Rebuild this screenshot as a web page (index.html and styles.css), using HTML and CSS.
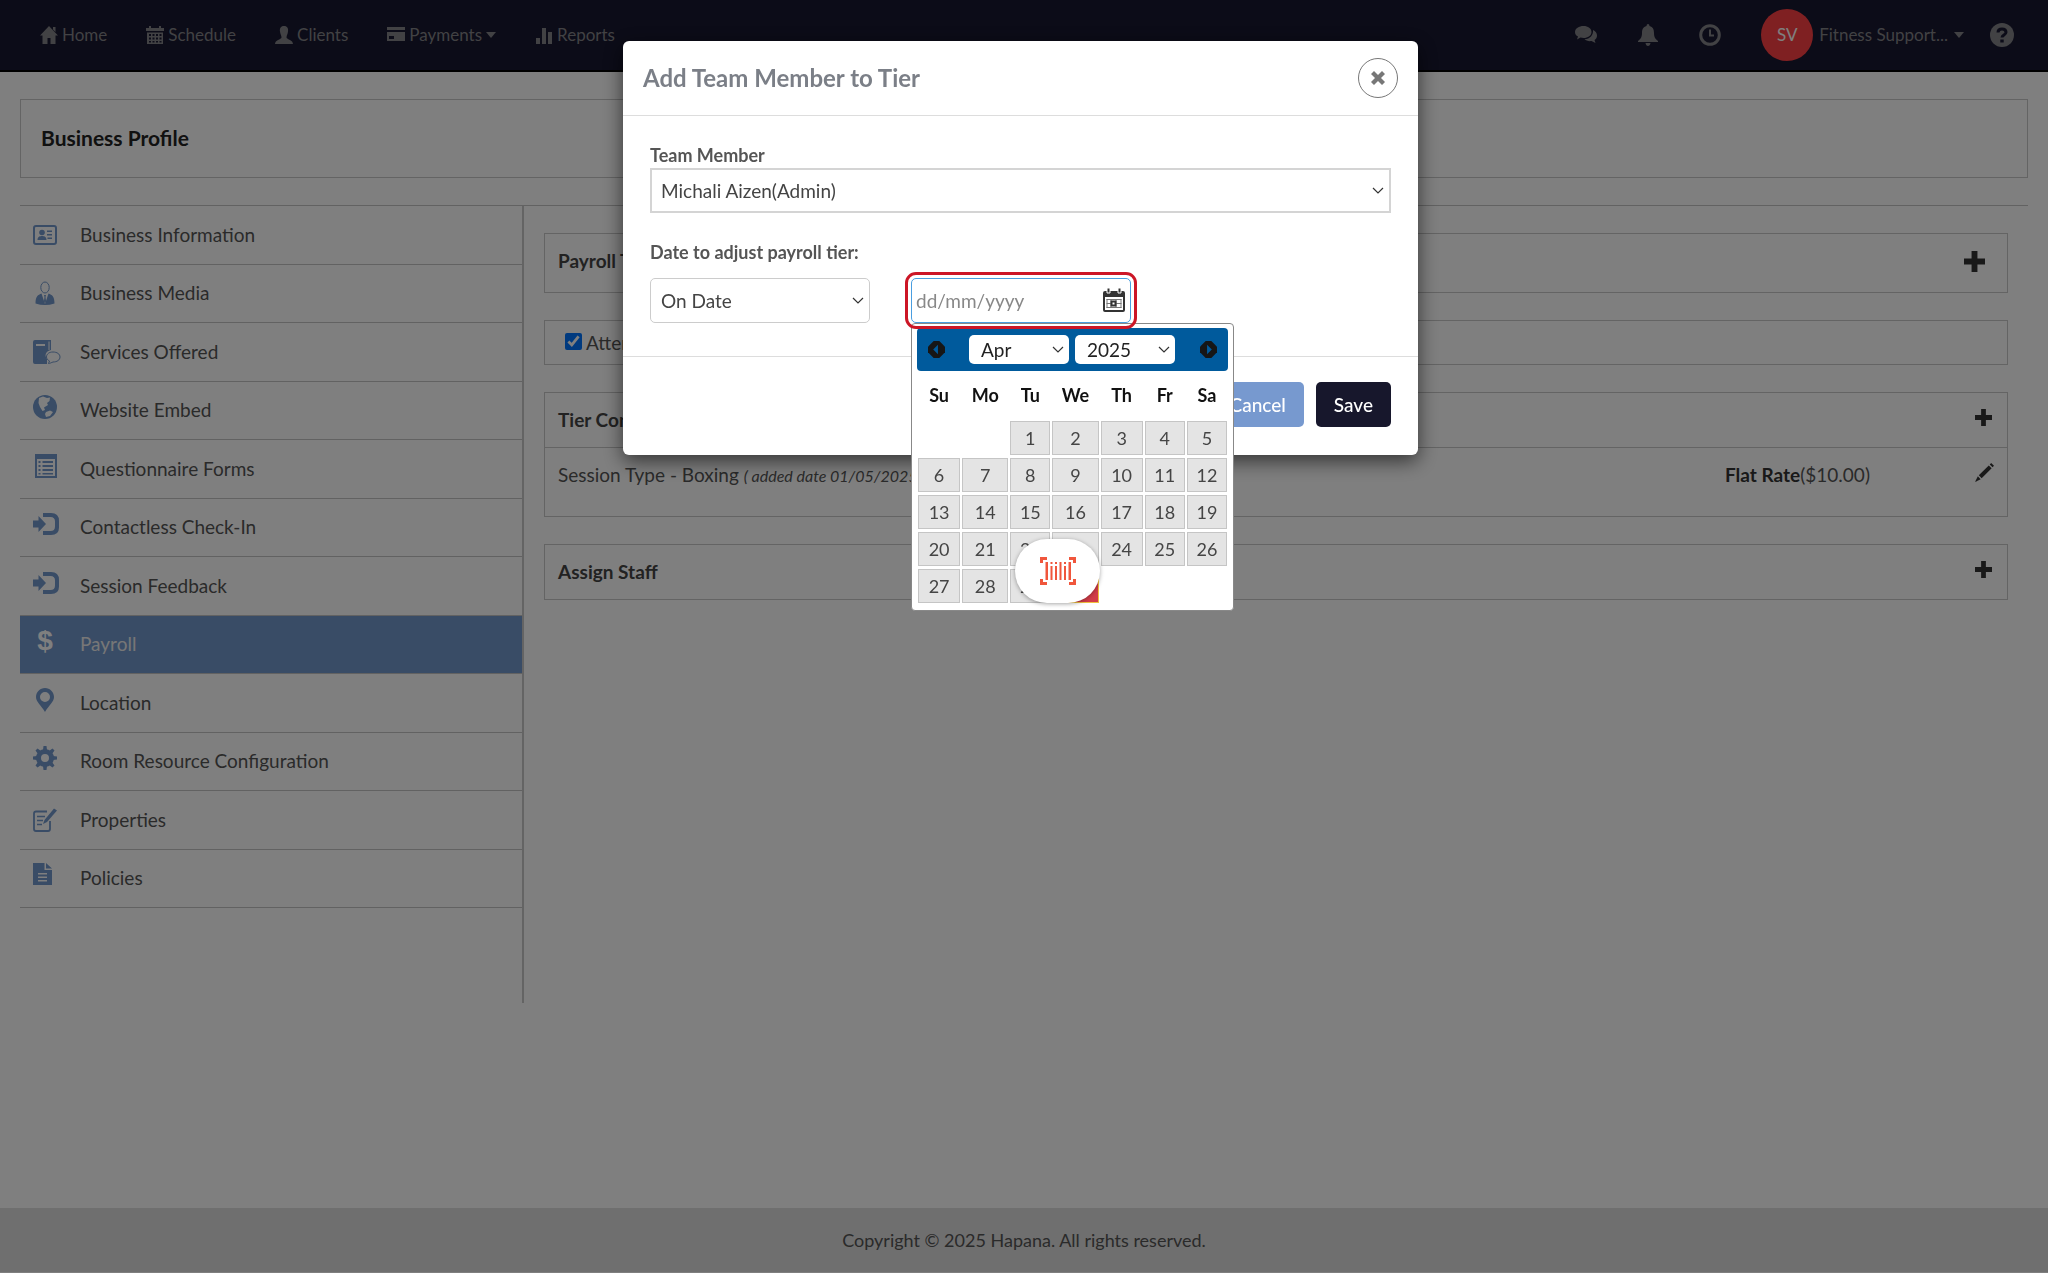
FILE: index.html
```html
<!DOCTYPE html>
<html lang="en">
<head>
<meta charset="utf-8">
<title>Business Profile</title>
<link rel="stylesheet" href="styles.css">
</head>
<body>
<svg class="sprite" aria-hidden="true">
  <symbol id="i-plus" viewBox="0 0 20 20"><path d="M7.200 0H12.800V7.200H20V12.800H12.800V20H7.200V12.800H0V7.200H7.200Z"/></symbol>
  <symbol id="i-caret" viewBox="0 0 10 6"><path d="M0 0H10L5 6Z"/></symbol>
  <symbol id="i-signin" viewBox="0 0 26 22"><path d="M0 7.500H5.500V3L13 11L5.500 19V14.500H0ZM10 0H18Q26 0 26 8V14.500Q26 22 18 22H10V18H17.500Q22 18 22 13.500V8.500Q22 4 17.500 4H10Z"/></symbol>
</svg>

<header class="nav">
  <nav class="nav-links">
    <a href="#"><svg viewBox="0 0 18 18"><path d="M9 0L18 9.500H15.500V18H10.500V12H7.500V18H2.500V9.500H0L9 0ZM13 1H15.500V6L13 3.500Z"/></svg>Home</a>
    <a href="#"><svg viewBox="0 0 18 18"><path d="M0 2H3V0H5V2H13V0H15V2H18V5H0ZM1 6.500H17V18H1ZM3 8V10H5V8ZM6.500 8V10H8.500V8ZM10 8V10H12V8ZM13.500 8V10H15.500V8ZM3 11.500V13.500H5V11.500ZM6.500 11.500V13.500H8.500V11.500ZM10 11.500V13.500H12V11.500ZM13.500 11.500V13.500H15.500V11.500ZM3 15V16.500H5V15ZM6.500 15V16.500H8.500V15ZM10 15V16.500H12V15ZM13.500 15V16.500H15.500V15Z" fill-rule="evenodd"/></svg>Schedule</a>
    <a href="#"><svg viewBox="0 0 18 18"><path d="M9 0C12.500 0 13.500 2.500 13 5.500C12.800 8 11.500 9.500 11.500 11.500C12 13.500 18 14 18 18H0C0 14 6 13.500 6.500 11.500C6.500 9.500 5.200 8 5 5.500C4.500 2.500 5.500 0 9 0Z"/></svg>Clients</a>
    <a href="#"><svg viewBox="0 0 18 18"><path d="M0 1H18V4H0ZM0 6H18V15H0ZM2 10V13H7V10Z" fill-rule="evenodd"/></svg>Payments<svg class="caret"><use href="#i-caret"/></svg></a>
    <a href="#"><svg viewBox="0 0 18 18"><path d="M1 12H5V18H1ZM7 2H11V18H7ZM13 6H17V18H13Z"/></svg>Reports</a>
  </nav>
  <div class="nav-tools">
    <a href="#" aria-label="Messages"><svg class="tool" viewBox="0 0 22 22"><path d="M8.500 2C13 2 16.500 4.500 16.500 8S13 14 8.500 14C7.500 14 6.500 13.800 5.500 13.500L2 15.500L3 12.500C1 11.500 0 10 0 8C0 4.500 4 2 8.500 2ZM18 6C20.500 7 22 9 22 11.500C22 13.500 21 15 19.500 16L20.500 19L16.500 17C13.500 17.500 11 16.500 9.500 15.300C15 15 18.500 11 18 6Z"/></svg></a>
    <a href="#" aria-label="Notifications"><svg class="tool" viewBox="0 0 22 22"><path d="M11 0Q12.500 0 12.500 2C16 3 17 5.500 17 9C17 13.500 18.500 15 21 17V18H1V17C3.500 15 5 13.500 5 9C5 5.500 6 3 9.500 2Q9.500 0 11 0ZM8.500 19H13.500Q13 22 11 22T8.500 19Z"/></svg></a>
    <a href="#" aria-label="Recent"><svg class="tool" viewBox="0 0 22 22"><circle cx="11" cy="11" r="9.300" fill="none" stroke="currentColor" stroke-width="3"/><path d="M11 5.500V11.500H15" fill="none" stroke="currentColor" stroke-width="2"/></svg></a>
    <a href="#" class="account"><span class="avatar">SV</span>Fitness Support...<svg class="caret"><use href="#i-caret"/></svg></a>
    <a href="#" aria-label="Help"><svg class="help" viewBox="0 0 24 24"><circle cx="12" cy="12" r="12"/><path d="M8 9.500Q8 6 12 6T16 9.300C16 12 12 12 12 14.500" fill="none" stroke="#181830" stroke-width="3"/><rect x="10.300" y="16.500" width="3.400" height="3" fill="#181830"/></svg></a>
  </div>
</header>

<div class="page">
  <h1 class="title">Business Profile</h1>
  <div class="columns">
    <nav class="side">
      <ul>
        <li><a href="#"><svg viewBox="0 0 24 24"><rect x="1" y="3" width="22" height="18" rx="2" fill="none" stroke="currentColor" stroke-width="2"/><circle cx="9" cy="9.500" r="2.800"/><path d="M4.500 17C4.500 13.500 7 13 9 13S13.500 13.500 13.500 17ZM14 7.500H19V9H14ZM14 11H19V12.500H14ZM14.500 14.500H19V16H14.500Z"/></svg>Business Information</a></li>
        <li><a href="#"><svg viewBox="0 0 24 24"><ellipse cx="12" cy="6.500" rx="4.200" ry="5.500" fill="none" stroke="currentColor"/><path d="M8.500 12.500L12 23L15.500 12.500C19 14 21.500 15 21.500 22.500Q12 25.500 2.500 22.500C2.500 15 5 14 8.500 12.500ZM11 14H13L12.500 16L13 20L12 22L11 20L11.500 16Z"/></svg>Business Media</a></li>
        <li><a href="#"><svg class="wide" viewBox="0 0 28 24"><path d="M2 0H18V10C13 11 11 15 14 19V24H2Q0 24 0 22V2Q0 0 2 0ZM3 4V6H12V4Z" fill-rule="evenodd"/><path d="M16 1.500V10" fill="none" stroke="#fff"/><path d="M20 12C24 12 27 14 27 17S24 22 20 22C18.500 22.500 17 23.500 15.500 23.500L16.500 21C14.500 20 13.500 18.500 13.500 17C13.500 14 16 12 20 12Z" fill="#fff" stroke="currentColor"/></svg>Services Offered</a></li>
        <li class="up"><a href="#"><svg viewBox="0 0 24 24"><circle cx="12" cy="12" r="12"/><path d="M6 3L10 1.500L14 3L17 2.500L16.500 6L14 8L15 10L11 12.500L12 15L9.500 16L7 12L5.500 8ZM13 17L17 15.500L20 17L17 21L13 22L12 19Z" fill="#fff"/></svg>Website Embed</a></li>
        <li class="up"><a href="#"><svg viewBox="0 0 24 24"><path d="M2 0H24V24H2ZM4 5V22H22V5ZM5.500 7H7.500V9H5.500ZM9.500 7H20V9H9.500ZM5.500 11H7.500V13H5.500ZM9.500 11H20V13H9.500ZM5.500 15H7.500V17H5.500ZM9.500 15H20V17H9.500ZM5.500 19H7.500V20.500H5.500ZM9.500 19H20V20.500H9.500Z" fill-rule="evenodd"/></svg>Questionnaire Forms</a></li>
        <li class="up"><a href="#"><svg class="signin"><use href="#i-signin"/></svg>Contactless Check-In</a></li>
        <li class="up"><a href="#"><svg class="signin"><use href="#i-signin"/></svg>Session Feedback</a></li>
        <li class="up active"><a href="#"><span class="dollar" aria-hidden="true">$</span>Payroll</a></li>
        <li class="up"><a href="#"><svg viewBox="0 0 24 24"><path d="M12 0C17 0 21 4 21 9C21 14 16 17 12 24C8 17 3 14 3 9C3 4 7 0 12 0ZM12 4A5 5 0 1 0 12 14A5 5 0 1 0 12 4Z" fill-rule="evenodd"/></svg>Location</a></li>
        <li class="up"><a href="#"><svg viewBox="0 0 24 24"><circle cx="12" cy="12" r="6.500" fill="none" stroke="currentColor" stroke-width="5"/><path d="M10 4L10.500 0H13.500L14 4ZM10 20L10.500 24H13.500L14 20ZM4 10L0 10.500V13.500L4 14ZM20 10L24 10.500V13.500L20 14ZM5 8L2.500 4.500L4.500 2.500L8 5ZM16 5L19.500 2.500L21.500 4.500L19 8ZM5 16L2.500 19.500L4.500 21.500L8 19ZM16 19L19.500 21.500L21.500 19.500L19 16Z"/></svg>Room Resource Configuration</a></li>
        <li><a href="#"><svg viewBox="0 0 24 24"><path d="M14 3.500H3Q1 3.500 1 5.500V21Q1 23 3 23H15Q17 23 17 21V13" fill="none" stroke="currentColor" stroke-width="1.800"/><path d="M4 8.500H12M4 12.500H10M4 16.500H9" stroke="currentColor" stroke-width="1.500"/><path d="M21 0.500L24 2.500L14 14L10 16L11.500 12Z"/></svg>Properties</a></li>
        <li class="up"><a href="#"><svg viewBox="0 0 24 24"><path d="M0 0H11.500V7H19V22H0ZM13 0L19 5.500H13ZM5 10V11.500H14V10ZM5 13.500V15H14V13.500ZM5 17V18.500H14V17Z" fill-rule="evenodd"/></svg>Policies</a></li>
      </ul>
    </nav>
    <main class="content">
      <section class="card tall"><h2>Payroll Tier</h2><button class="icon-btn big" aria-label="Add payroll tier"><svg><use href="#i-plus"/></svg></button></section>
      <section class="card check"><label><input type="checkbox" checked>Attendance</label></section>
      <section class="card group">
        <div class="card-head"><h2>Tier Configuration</h2><button class="icon-btn" aria-label="Add configuration"><svg><use href="#i-plus"/></svg></button></div>
        <div class="card-row">
          <p>Session Type - Boxing <em>( added date 01/05/2025</em></p>
          <p class="rate"><b>Flat Rate</b>($10.00)</p>
          <button class="icon-btn" aria-label="Edit"><svg class="pencil" viewBox="0 0 20 20"><path d="M15.500 1.500L17 0L20 3L18.500 4.500ZM14.500 2.500L17.500 5.500L7 16L4 13ZM3 14L6 17L0 20Z"/></svg></button>
        </div>
      </section>
      <section class="card"><div class="card-head"><h2>Assign Staff</h2><button class="icon-btn" aria-label="Assign staff"><svg><use href="#i-plus"/></svg></button></div></section>
    </main>
  </div>
</div>
<footer class="foot">Copyright © 2025 Hapana. All rights reserved.</footer>

<div class="backdrop">
  <div class="modal" role="dialog" aria-labelledby="dlg-title">
    <div class="modal-head">
      <h2 id="dlg-title">Add Team Member to Tier</h2>
      <button class="close" aria-label="Close"><svg viewBox="0 0 16 16"><path d="M4 1L8 5L12 1L15 4L11 8L15 12L12 15L8 11L4 15L1 12L5 8L1 4Z"/></svg></button>
    </div>
    <div class="modal-body">
      <label for="member">Team Member</label>
      <select id="member" class="field square"><option>Michali Aizen(Admin)</option></select>
      <label for="when">Date to adjust payroll tier:</label>
      <div class="row">
        <select id="when" class="field"><option>On Date</option></select>
        <div class="date">
          <input class="field" type="text" placeholder="dd/mm/yyyy" aria-label="Date">
          <svg class="cal" viewBox="0 0 24 24"><path d="M3 3H21Q23 3 23 5V22Q23 24 21 24H3Q1 24 1 22V5Q1 3 3 3ZM3 9V22H21V9Z" fill-rule="evenodd"/><path d="M5 0H8V5H5ZM16 0H19V5H16Z" stroke="#fff" stroke-width="1"/><path d="M4.500 11.500H19.500M4.500 15.500H19.500M4.500 19.500H19.500M5 11V20M9 11V20M14 11V20M19 11V20" stroke="#777" fill="none"/><rect x="8.500" y="12.500" width="6" height="6"/><rect x="10.500" y="14.500" width="2" height="2" fill="#fff"/></svg>
          <div class="picker">
            <div class="picker-head">
              <button aria-label="Previous month"><svg viewBox="0 0 18 18"><path d="M6 0H12L18 6V12L12 18H6L0 12V6Z"/><path d="M10.500 4V14L5.500 9Z" fill="#005a9c"/></svg></button>
              <select aria-label="Month"><option>Apr</option></select>
              <select aria-label="Year"><option>2025</option></select>
              <button aria-label="Next month"><svg viewBox="0 0 18 18"><path d="M6 0H12L18 6V12L12 18H6L0 12V6Z"/><path d="M7.500 4V14L12.500 9Z" fill="#005a9c"/></svg></button>
            </div>
            <table>
              <colgroup><col class="c-l"><col class="c-xl"><col class="c-m"><col class="c-xl"><col class="c-l"><col class="c-m"><col class="c-m"></colgroup>
              <thead><tr><th>Su</th><th>Mo</th><th>Tu</th><th>We</th><th>Th</th><th>Fr</th><th>Sa</th></tr></thead>
              <tbody>
                <tr><td></td><td></td><td><a href="#">1</a></td><td><a href="#">2</a></td><td><a href="#">3</a></td><td><a href="#">4</a></td><td><a href="#">5</a></td></tr>
                <tr><td><a href="#">6</a></td><td><a href="#">7</a></td><td><a href="#">8</a></td><td><a href="#">9</a></td><td><a href="#">10</a></td><td><a href="#">11</a></td><td><a href="#">12</a></td></tr>
                <tr><td><a href="#">13</a></td><td><a href="#">14</a></td><td><a href="#">15</a></td><td><a href="#">16</a></td><td><a href="#">17</a></td><td><a href="#">18</a></td><td><a href="#">19</a></td></tr>
                <tr><td><a href="#">20</a></td><td><a href="#">21</a></td><td><a href="#">22</a></td><td><a href="#">23</a></td><td><a href="#">24</a></td><td><a href="#">25</a></td><td><a href="#">26</a></td></tr>
                <tr><td><a href="#">27</a></td><td><a href="#">28</a></td><td><a href="#">29</a></td><td><a href="#" class="today">30</a></td><td></td><td></td><td></td></tr>
              </tbody>
            </table>
          </div>
        </div>
      </div>
    </div>
    <div class="modal-foot"><button class="btn cancel">Cancel</button><button class="btn save">Save</button></div>
  </div>
</div>
<button class="scan" aria-label="Scan barcode"><svg viewBox="0 0 36 28"><path d="M1.500 6V1.500H7M29 1.500H34.500V6M1.500 22V26.500H7M29 26.500H34.500V22" fill="none" stroke="#f0563c" stroke-width="3"/><path d="M5.500 5H8V23H5.500ZM10.500 5H12.500V7H10.500ZM10.500 9H12.500V23H10.500ZM15 5H17V7H15ZM15 9H17V23H15ZM19.500 5H21.500V23H19.500ZM24 5H26V7H24ZM24 9H26V23H24ZM28.500 5H31V23H28.500Z" fill="#f0563c"/></svg></button>
</body>
</html>
```
FILE: styles.css
```css
* { box-sizing: border-box; }
body {
  margin: 0;
  min-height: 100vh;
  display: flex;
  flex-direction: column;
  background: #fff;
  color: #555;
  font: 19px/24px Lato, "Open Sans", sans-serif;
}
a { color: inherit; text-decoration: none; }
h1, h2, p, ul { margin: 0; padding: 0; }
button, select, input { font: inherit; color: inherit; }
button { border: 0; background: none; padding: 0; cursor: pointer; }
svg { fill: currentColor; flex: none; overflow: visible; }
.sprite { display: none; }

/* top navigation */
.nav {
  display: flex;
  justify-content: space-between;
  align-items: center;
  height: 72px;
  padding: 0 34px 0 40px;
  background: #181830;
  border-bottom: 2px solid #000;
  color: #848488;
  font-size: 17px;
}
.nav-links, .nav-tools { display: flex; align-items: center; }
.nav-links { gap: 39px; }
.nav-links a { display: flex; align-items: center; gap: 4px; }
.nav-links svg { width: 18px; height: 18px; }
.nav .caret { width: 10px; height: 6px; }
.nav-tools { gap: 40px; }
.nav-tools a { display: flex; align-items: center; }
.tool { width: 22px; height: 22px; }
.nav .account { gap: 6px; margin-right: -14px; }
.help { width: 24px; height: 24px; }
.avatar {
  display: grid;
  place-items: center;
  width: 52px;
  height: 52px;
  border-radius: 50%;
  background: #ff4144;
  color: #fff;
}

/* page frame */
.page { flex: 1; padding: 27px 20px 0; }
.title {
  border: 1px solid #c8c8c8;
  padding: 25px 20px 26px;
  font-size: 21px;
  line-height: 26px;
  color: #222;
}
.columns {
  display: flex;
  margin-top: 27px;
  border-top: 1px solid #c4c4c4;
}
.side {
  flex: 0 0 504px;
  min-height: 797px;
  border-right: 2px solid #c8c8c8;
}
.side ul {
  display: grid;
  grid-auto-rows: 1fr;
  height: 702px;
  list-style: none;
}
.side li { border-bottom: 1px solid #c4c4c4; }
.side a { display: flex; align-items: center; height: 100%; padding-left: 13px; }
.side svg, .dollar { width: 24px; height: 24px; margin-right: 23px; color: #7298cc; }
.side svg.wide { width: 28px; margin-right: 19px; }
.side svg.signin { width: 26px; height: 22px; margin-right: 21px; }
.up svg, .dollar { margin-bottom: 6px; }
.side .dollar { color: #fff; font: 700 28px/24px "Liberation Sans", sans-serif; text-align: center; }
.side .active { background: #7298cc; color: #eee; }

/* content cards */
.content { flex: 1; padding: 27px 20px 0; }
.card { border: 1px solid #c8c8c8; margin-bottom: 27px; }
.card h2 { font-size: 19px; line-height: 24px; color: #444; }
.tall, .card-head { display: flex; justify-content: space-between; align-items: center; }
.tall { height: 60px; padding: 0 22px 4px 13px; }
.card-head { height: 54px; padding: 0 15px 0 13px; }
.check { height: 45px; padding: 10px 20px; }
.check label { display: flex; align-items: center; gap: 4px; }
.check input { width: 17px; height: 17px; margin: 0 0 3px; accent-color: #0075ff; }
.card-row {
  display: flex;
  align-items: flex-start;
  height: 69px;
  padding: 15px 13px;
  border-top: 1px solid #c8c8c8;
}
.card-row p:first-child { flex: 1; }
.card-row em { font-size: 16px; }
.rate { width: 250px; }
.rate b { color: #333; }
.icon-btn { display: flex; color: #333; }
.icon-btn svg { width: 17px; height: 17px; }
.icon-btn.big svg { width: 21px; height: 21px; }
.icon-btn svg.pencil { width: 19px; height: 19px; }
.card-head .icon-btn { margin-bottom: 5px; }

.foot {
  padding: 20px;
  border-bottom: 1px solid #fff;
  background: #dedede;
  text-align: center;
  font-size: 18px;
}

/* dialog */
.backdrop {
  position: fixed;
  inset: 0;
  display: flex;
  justify-content: center;
  align-items: flex-start;
  padding: 41px 7px 0 0;
  background: rgba(0, 0, 0, .5);
}
.modal {
  width: 795px;
  border-radius: 6px;
  background: #fff;
  box-shadow: 0 6px 20px rgba(0, 0, 0, .6);
}
.modal-head {
  display: flex;
  justify-content: space-between;
  align-items: center;
  height: 75px;
  padding: 0 20px;
  border-bottom: 1px solid #ddd;
}
.modal-head h2 { font-size: 24px; line-height: 32px; color: #7b7f87; }
.close {
  display: grid;
  place-items: center;
  width: 40px;
  height: 40px;
  border: 1px solid #777;
  border-radius: 50%;
  color: #777;
}
.close svg { width: 16px; height: 16px; }
.modal-body { padding: 27px 27px 33px; border-bottom: 1px solid #ddd; }
.modal-body > label { display: block; font-size: 18px; line-height: 25px; font-weight: 700; }
.field {
  display: block;
  width: 220px;
  height: 45px;
  padding: 0 10px;
  border: 1px solid #ccc;
  border-radius: 5px;
  color: #444;
}
select {
  appearance: none;
  background: #fff url("data:image/svg+xml,%3Csvg xmlns='http://www.w3.org/2000/svg' width='12' height='7'%3E%3Cpath d='M1 1l5 5 5-5' fill='none' stroke='%23333' stroke-width='1.200'/%3E%3C/svg%3E") no-repeat right 5px center;
}
.field.square { width: 100%; padding: 0 9px; border: 2px solid #d4d4d4; border-radius: 0; margin-bottom: 27px; }
.row { display: flex; gap: 41px; margin-top: 13px; }
.date { position: relative; }
.date .field {
  padding: 0 4px;
  border-color: #4a9ee0;
  outline: 3px solid #cc1626;
  outline-offset: 3px;
  position: relative;
  z-index: 2;
  background: #fff;
}
.date input::placeholder { color: #888; opacity: 1; }
.cal { position: absolute; z-index: 3; right: 5px; top: 10px; width: 24px; height: 24px; color: #333; }
.picker {
  position: absolute;
  z-index: 1;
  top: 45px;
  left: 0;
  width: 323px;
  padding: 4px 5px 6px;
  border: 1px solid #888;
  border-radius: 4px;
  background: #fff;
}
.picker-head {
  display: flex;
  align-items: center;
  gap: 6px;
  height: 43px;
  padding: 0 11px;
  border-radius: 4px;
  background: #005a9c;
}
.picker-head svg { display: block; width: 17px; height: 17px; color: #161616; }
.picker-head button:first-child { margin-right: 18px; }
.picker-head button:last-child { margin-left: auto; }
.picker-head select { width: 100px; height: 29px; border: 0; border-radius: 5px; padding: 0 12px; color: #222; }
.picker table { width: 100%; table-layout: fixed; border-collapse: collapse; font-size: 18px; }
.picker th { height: 48px; padding: 0; color: #111; }
.picker td { height: 37px; padding: 1px; text-align: center; }
.picker td a { display: block; height: 34px; border: 1px solid #c5c5c5; background: #e4e4e4; line-height: 32px; color: #454545; }
.picker td a.today { background: #d23c48; border-color: #f0c040; color: #fff; }
.c-m { width: 42px; }
.c-l { width: 44px; }
.c-xl { width: 48px; }
.modal-foot { display: flex; justify-content: flex-end; gap: 12px; padding: 25px 27px 28px; }
.btn { height: 45px; padding: 0 18px; border-radius: 5px; color: #fff; font-weight: 500; }
.cancel { background: #7799cf; }
.save { background: #17172c; }

/* floating scanner button */
.scan {
  position: fixed;
  left: calc(50% - 9px);
  top: 539px;
  display: grid;
  place-items: center;
  width: 85px;
  height: 64px;
  border-radius: 32px;
  background: #fff;
  box-shadow: 0 1px 4px rgba(0, 0, 0, .35);
}
.scan svg { width: 36px; height: 28px; }
```
